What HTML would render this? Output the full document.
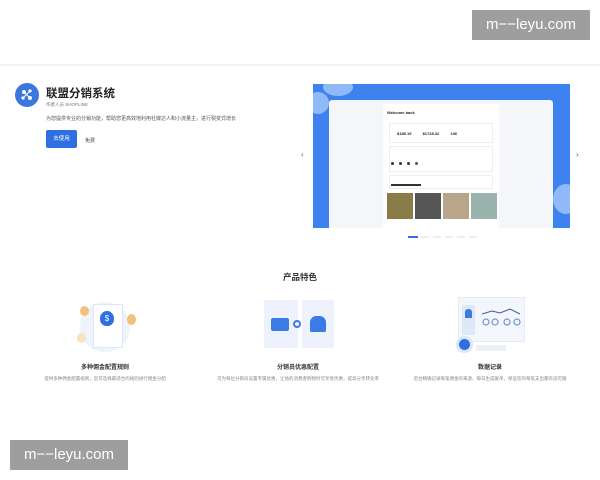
<!DOCTYPE html>
<html><head><meta charset="utf-8"><style>
*{margin:0;padding:0;box-sizing:border-box}
body{width:600px;height:480px;overflow:hidden;background:#fff;font-family:"Liberation Sans","Noto Sans CJK SC",sans-serif;position:relative;color:#222}
.a{position:absolute}
.wm{background:#9e9e9e;color:#fff;font-size:15px;text-align:center;line-height:30px;width:118px;height:30px}
.t{font-size:5px;color:#777;white-space:nowrap}
.ft{font-size:6px;font-weight:bold;text-align:center;width:190px;color:#333}
.fd{font-size:4.5px;color:#888;text-align:center;width:180px;line-height:7px}
</style></head><body>
<div class="a" style="left:0;top:64px;width:600px;height:3px;background:linear-gradient(#eee,#fff)"></div>
<div class="a wm" style="left:472px;top:10px">m−−leyu.com</div>
<div class="a wm" style="left:10px;top:440px">m−−leyu.com</div>

<div class="a" style="left:15px;top:83px;width:24px;height:24px;border-radius:50%;background:#3a78df"></div>
<svg class="a" style="left:15px;top:83px" width="24" height="24"><g fill="#fff"><circle cx="9" cy="9" r="2"/><circle cx="15" cy="8" r="1.6"/><circle cx="8" cy="15" r="1.6"/><circle cx="15" cy="15" r="2"/></g><path d="M9 9L15 15M15 8L8 15" stroke="#fff" stroke-width="1"/></svg>
<div class="a" style="left:46px;top:85px;font-size:11.5px;font-weight:bold">联盟分销系统</div>
<div class="a t" style="left:46px;top:102px;font-size:4.5px">作者人员 SHOPLINE</div>
<div class="a t" style="left:46px;top:115px;color:#555">为您提供专业的分销功能，帮助您更高效地利用社媒达人和小流量主，进行裂变式增长</div>
<div class="a" style="left:46px;top:130px;width:31px;height:18px;background:#2f6fe0;border-radius:2px;color:#fff;font-size:5.5px;line-height:18px;text-align:center">去使用</div>
<div class="a t" style="left:85px;top:137px;color:#444">免费</div>

<div class="a" style="left:313px;top:84px;width:257px;height:144px;background:#3d82ee;overflow:hidden">
<div class="a" style="left:-6px;top:8px;width:22px;height:22px;border-radius:50%;background:#8fbaf7"></div>
<div class="a" style="left:10px;top:-6px;width:30px;height:18px;border-radius:50%;background:#8fbaf7"></div>
<div class="a" style="left:240px;top:100px;width:26px;height:30px;border-radius:50%;background:#8fbaf7"></div>
<div class="a" style="left:16px;top:16px;width:224px;height:130px;background:#f4f6fa;border-radius:3px"></div>
<div class="a" style="left:70px;top:20px;width:116px;height:124px;background:#fff">
<div class="a" style="left:4px;top:6px;font-size:4px;font-weight:bold">Welcome back</div>
<div class="a" style="left:6px;top:19px;width:104px;height:20px;border:1px solid #eee"></div>
<div class="a" style="left:14px;top:27px;font-size:4px;font-weight:bold">$185.19&nbsp;&nbsp;&nbsp;&nbsp;&nbsp;&nbsp;&nbsp;&nbsp;&nbsp;&nbsp;$1728.32&nbsp;&nbsp;&nbsp;&nbsp;&nbsp;&nbsp;&nbsp;&nbsp;&nbsp;&nbsp;196</div>
<div class="a" style="left:6px;top:42px;width:104px;height:26px;border:1px solid #eee"></div>
<div class="a" style="left:8px;top:58px;width:3px;height:3px;border-radius:50%;background:#333;box-shadow:8px 0 #333,16px 0 #333,24px 0 #555"></div>
<div class="a" style="left:6px;top:71px;width:104px;height:14px;border:1px solid #eee"></div>
<div class="a" style="left:8px;top:80px;width:30px;height:1.5px;background:#333"></div>
<div class="a" style="left:4px;top:89px;width:26px;height:26px;background:#8a7b4a"></div>
<div class="a" style="left:32px;top:89px;width:26px;height:26px;background:#555"></div>
<div class="a" style="left:60px;top:89px;width:26px;height:26px;background:#b9a68a"></div>
<div class="a" style="left:88px;top:89px;width:26px;height:26px;background:#9ab3ad"></div>
</div></div>
<div class="a" style="left:301px;top:150px;font-size:8px;color:#666">‹</div>
<div class="a" style="left:576px;top:150px;font-size:8px;color:#666">›</div>
<div class="a" style="left:408px;top:236px;width:10px;height:1.5px;background:#2f6fe0"></div>
<div class="a" style="left:421px;top:236px;width:56px;height:1.5px;background:repeating-linear-gradient(90deg,#eee 0 8px,transparent 8px 12px)"></div>

<div class="a" style="left:0;top:271px;width:600px;text-align:center;font-size:8.5px;font-weight:bold;color:#333">产品特色</div>

<div class="a" style="left:80px;top:302px;width:50px;height:50px;border-radius:50%;background:#eef3fc"></div>
<div class="a" style="left:93px;top:304px;width:30px;height:44px;background:#fff;border:1px solid #dde6f5"></div>
<div class="a" style="left:100px;top:311px;width:14px;height:15px;border-radius:50% 50% 45% 45%;background:#2f6fe0;color:#fff;font-size:8px;text-align:center;line-height:15px">$</div>
<div class="a" style="left:80px;top:306px;width:9px;height:10px;border-radius:50%;background:#f1c27d"></div>
<div class="a" style="left:127px;top:314px;width:9px;height:11px;border-radius:50%;background:#f1c27d"></div>
<div class="a" style="left:77px;top:333px;width:9px;height:10px;border-radius:50%;background:#f7e2c3"></div>

<div class="a" style="left:264px;top:300px;width:34px;height:48px;background:#edf2fc"></div>
<div class="a" style="left:302px;top:300px;width:32px;height:48px;background:#edf2fc"></div>
<div class="a" style="left:271px;top:318px;width:18px;height:13px;background:#3b7be6;border-radius:2px"></div>
<div class="a" style="left:293px;top:320px;width:8px;height:8px;border-radius:50%;border:2px solid #3b7be6"></div>
<div class="a" style="left:310px;top:316px;width:16px;height:16px;border-radius:40% 40% 10% 10%;background:#3b7be6"></div>

<div class="a" style="left:458px;top:297px;width:67px;height:45px;background:#f3f6fb;border:1px solid #e6ebf3"></div>
<div class="a" style="left:462px;top:305px;width:13px;height:30px;background:#dfe8f8"></div>
<div class="a" style="left:465px;top:309px;width:7px;height:9px;background:#3b7be6;border-radius:3px 3px 0 0"></div>
<svg class="a" style="left:480px;top:304px" width="44" height="24"><path d="M2 10L12 7L20 9L30 5L40 10" stroke="#3b5fa8" fill="none" stroke-width="1"/><g fill="none" stroke="#6d95d8" stroke-width="1.2"><circle cx="6" cy="18" r="3"/><circle cx="15" cy="18" r="3"/><circle cx="27" cy="18" r="3"/><circle cx="37" cy="18" r="3"/></g></svg>
<div class="a" style="left:456px;top:336px;width:17px;height:17px;border-radius:50%;background:#2f6fe0;border:3px solid #dbe6fa"></div>
<div class="a" style="left:476px;top:345px;width:30px;height:6px;background:#eceff4"></div>

<div class="a ft" style="left:10px;top:362px">多种佣金配置规则</div>
<div class="a fd" style="left:15px;top:375px">提供多种佣金配置规则，您可选择最适合的规则进行佣金分配</div>
<div class="a ft" style="left:203px;top:362px">分销员优惠配置</div>
<div class="a fd" style="left:208px;top:375px">可为每位分销员设置专属优惠，让他的消费者购物时可享受优惠，提高分享转化率</div>
<div class="a ft" style="left:395px;top:362px">数据记录</div>
<div class="a fd" style="left:400px;top:375px">后台精确记录每笔佣金的来源、每日生成账单，保证您的每笔支出都有迹可循</div>
</body></html>
